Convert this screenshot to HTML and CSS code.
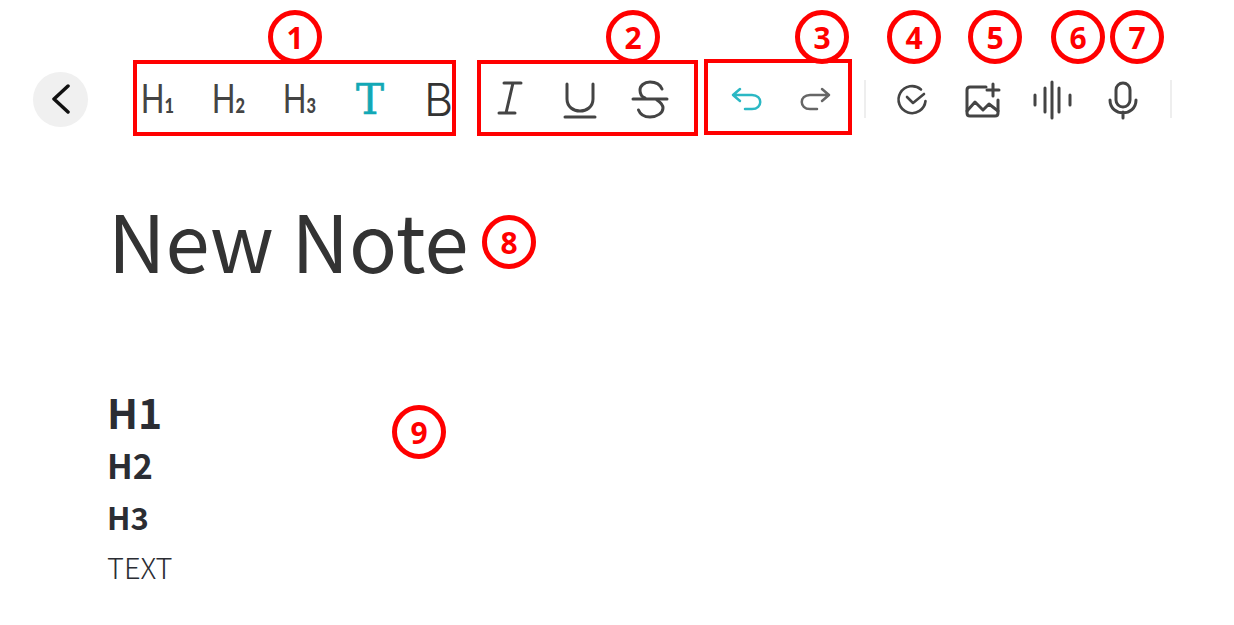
FILE: index.html
```html
<!DOCTYPE html>
<html lang="en">
<head>
    <meta charset="UTF-8">
    <title>New Note</title>
    <link rel="stylesheet" href="styles.css">
</head>
<body>
    <div class="toolbar">
        <button class="back-btn">
            <svg width="20" height="30" viewBox="0 0 20 30"><path d="M17 2 L3 15 L17 28" /></svg>
        </button>

        <div class="group group-heading">
            <span class="slot tool-h"><span class="tool-h-text">H<small>1</small></span></span>
            <span class="slot tool-h"><span class="tool-h-text">H<small>2</small></span></span>
            <span class="slot tool-h"><span class="tool-h-text">H<small>3</small></span></span>
            <span class="slot tool-t">T</span>
            <span class="slot tool-b">B</span>
        </div>

        <div class="group group-style">
            <span class="slot">
                <svg width="40" height="40" viewBox="0 0 40 40"><path d="M14 3 H31 M9 33 H25 M23 3 L16 33" /></svg>
            </span>
            <span class="slot">
                <svg width="40" height="40" viewBox="0 0 40 40"><path d="M7 4 V19 C7 35 33 35 33 19 V4" /><path d="M5 37 H35" /></svg>
            </span>
            <span class="slot">
                <svg width="40" height="40" viewBox="0 0 40 40"><path d="M3 19 H37" /><path d="M32 9 C30 4 25 2 20 2 C14 2 10 6 10 10 C10 14 12 17 15 18" /><path d="M27 20 C30 22 33 25 33 28 C33 33 27 37 20 37 C14 37 10 34 8.5 30" /></svg>
            </span>
        </div>

        <div class="group group-history">
            <span class="slot">
                <svg class="teal thin" width="40" height="40" viewBox="0 0 40 40"><path d="M14 10 L7 16 L14 22 M7 16 H26 C37 16 37 30 26 30 H19" /></svg>
            </span>
            <span class="slot">
                <svg class="thin" width="40" height="40" viewBox="0 0 40 40"><path d="M26 10 L33 16 L26 22 M33 16 H14 C3 16 3 30 14 30 H21" /></svg>
            </span>
        </div>

        <div class="divider"></div>

        <span class="slot">
            <svg class="check" width="40" height="40" viewBox="0 0 40 40"><path d="M29 9.5 A13.5 13.5 0 1 0 33.5 21" /><path d="M15 17 L21 23 L32 14" /></svg>
        </span>
        <span class="slot">
            <svg width="40" height="40" viewBox="0 0 40 40"><path d="M24 7 H8 Q5 7 5 10 V33 Q5 36 8 36 H33 Q36 36 36 33 V20" /><path d="M5 31 L13 22 L21 30 L27 24 L36 31" /><path d="M31 4 V16 M25 10 H37" /></svg>
        </span>
        <span class="slot">
            <svg width="40" height="40" viewBox="0 0 40 40"><path d="M3 15 V25 M13 8 V32 M20 2 V38 M27 8 V32 M38 15 V25" /></svg>
        </span>
        <span class="slot">
            <svg width="40" height="40" viewBox="0 0 40 40"><rect x="14" y="3" width="14" height="24" rx="7" /><path d="M8 20 C8 37 34 37 34 20 M21 32 V38" /></svg>
        </span>

        <div class="divider"></div>
    </div>

    <main class="note">
        <h1 class="note-title">New Note</h1>
        <div class="note-body">
            <h2 class="line-h1">H1</h2>
            <h3 class="line-h2">H2</h3>
            <h4 class="line-h3">H3</h4>
            <p class="line-text">TEXT</p>
        </div>
    </main>

    <!-- numbered callouts -->
    <span class="badge b1">1</span>
    <span class="badge b2">2</span>
    <span class="badge b3">3</span>
    <span class="badge b4">4</span>
    <span class="badge b5">5</span>
    <span class="badge b6">6</span>
    <span class="badge b7">7</span>
    <span class="badge b8">8</span>
    <span class="badge b9">9</span>
</body>
</html>
```

FILE: styles.css
```css
body {
    margin: 0;
    background: white;
    color: #333;
    font-family: "Noto Sans CJK KR", "Noto Sans", sans-serif;
    height: 625px;
    overflow: hidden;
    position: relative;
}
svg {
    fill: none;
    stroke: #444;
    stroke-width: 3;
    stroke-linecap: round;
    stroke-linejoin: round;
}
svg.thin {
    stroke: #666;
    stroke-width: 2.5;
}
svg.teal {
    stroke: #2bb8c4;
}
svg.check {
    stroke-width: 2.6;
}
.slot svg {
    margin-top: 4px;
}
.toolbar {
    display: flex;
    align-items: center;
    height: 76px;
    margin-top: 60px;
    padding-left: 33px;
}
.back-btn {
    width: 55px;
    height: 55px;
    margin: 2px 45px 0 0;
    padding: 0;
    border: none;
    border-radius: 50%;
    background: #f0f0f0;
    display: flex;
    align-items: center;
    justify-content: center;
}
.back-btn svg {
    stroke: #111;
    stroke-width: 3.5;
}
.group {
    display: flex;
    align-items: center;
    box-sizing: border-box;
    height: 76px;
    border: 4px solid #f00;
    overflow: hidden;
    flex: none;
}
.group-heading {
    width: 323px;
    gap: 31px;
    margin-right: 21px;
}
.group-style {
    width: 221px;
    gap: 30px;
    padding-left: 9px;
    margin-right: 6px;
}
.group-history {
    width: 148px;
    gap: 30px;
    padding-left: 18px;
    margin-bottom: 2px;
}
.slot {
    width: 40px;
    height: 40px;
    flex: none;
    display: flex;
    align-items: center;
    justify-content: center;
}
.toolbar > .slot + .slot {
    margin-left: 30px;
}
.divider {
    width: 2px;
    height: 38px;
    background: #eee;
    flex: none;
    margin: 2px 26px 0 12px;
}
.divider:last-child {
    margin: 2px 0 0 28px;
}
.tool-h-text {
    display: block;
    font-family: "Lato", sans-serif;
    font-size: 40px;
    line-height: 40px;
    color: #444;
    white-space: nowrap;
    transform: scaleX(0.78);
}
.tool-h {
    padding-top: 6px;
    box-sizing: border-box;
}
.tool-h small {
    font-size: 21px;
    font-weight: 900;
}
.tool-t {
    font-family: "DejaVu Serif", serif;
    font-size: 42px;
    color: #12a8b5;
    -webkit-text-stroke: 0.6px #12a8b5;
    padding-top: 3px;
    box-sizing: border-box;
}
.tool-b {
    font-family: "Inter", sans-serif;
    font-weight: 300;
    font-size: 45px;
    color: #333;
    justify-content: flex-start;
    padding: 3px 0 0 3px;
    box-sizing: border-box;
}
.note {
    padding-left: 107px;
}
.note-title {
    margin: 44px 0 0 1px;
    font-size: 79.5px;
    font-weight: 400;
    line-height: 118px;
    color: #333;
}
.note-body {
    margin-top: 86px;
    color: #2b2d33;
}
.note-body h2,
.note-body h3,
.note-body h4,
.note-body p {
    margin: 0;
}
.line-h1 {
    font-size: 41px;
    font-weight: 700;
    line-height: 54px;
}
.line-h2 {
    font-size: 34px;
    font-weight: 700;
    line-height: 53px;
}
.line-h3 {
    font-size: 31px;
    font-weight: 700;
    line-height: 52px;
}
.line-text {
    font-size: 29px;
    font-weight: 300;
    line-height: 46px;
}
.badge {
    position: absolute;
    box-sizing: border-box;
    width: 54px;
    height: 54px;
    border: 5px solid #f00;
    border-radius: 50%;
    background: white;
    color: #f00;
    font-family: "Open Sans", sans-serif;
    font-weight: 700;
    font-size: 30px;
    display: flex;
    align-items: center;
    justify-content: center;
}
.b1 { left: 268px; top: 10px; }
.b2 { left: 606px; top: 10px; }
.b3 { left: 795px; top: 10px; }
.b4 { left: 887px; top: 10px; }
.b5 { left: 968px; top: 10px; }
.b6 { left: 1051px; top: 10px; }
.b7 { left: 1110px; top: 10px; }
.b8 { left: 482px; top: 215px; }
.b9 { left: 392px; top: 405px; }
```
